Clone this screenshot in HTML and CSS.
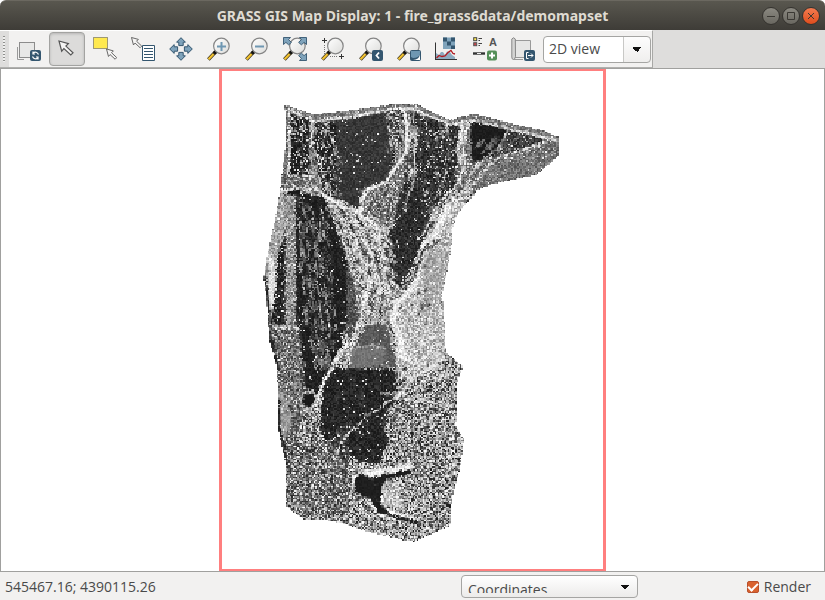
FILE: index.html
```html
<!DOCTYPE html>
<html lang="en">
<head>
<meta charset="utf-8">
<title>GRASS GIS Map Display</title>
<link rel="stylesheet" href="styles.css">
</head>
<body>
<svg class="defs" aria-hidden="true">
  <defs>
    <linearGradient id="glass" x1="0" y1="0" x2="1" y2="1"><stop offset="0" stop-color="#fff"/><stop offset="1" stop-color="#dcdcda"/></linearGradient>
    <g id="lens">
      <path d="M8.6 14.8 1.4 22.4" stroke="#3a3320" stroke-width="3.600"/>
      <path d="M6.6 17 1.6 22.2" stroke="#f2c230" stroke-width="2.2"/>
      <path d="M9.6 13.8 7.2 16.4" stroke="#111" stroke-width="3.4"/>
      <circle cx="14.4" cy="9" r="7.8" fill="url(#glass)" stroke="#858585" stroke-width="1.2"/>
    </g>
    <path id="pointer" d="M0 0 9.4 2.6 6.9 5.1 14 11.8 11.8 14 4.9 7.6 2.7 10.2Z" fill="#f6f5f4" stroke="#555" stroke-width="1.2"/>
    <path id="pan" d="M12 .7 16.4 5.2H14.2V8.6H9.8V5.2H7.6Z"/>
    <path id="corner" d="M.5.5H7.5L5.6 2.6 8.4 5.4 5.6 7.8 2.9 5.4.5 7.5Z"/>
    <rect id="badge" x="13" y="13" width="11" height="11" rx="2" fill="#34566f"/>
  </defs>
</svg>

<header class="titlebar">
  <h1>GRASS GIS Map Display: 1 - fire_grass6data/demomapset</h1>
  <div class="controls">
    <button class="control" aria-label="Minimize"><svg viewBox="0 0 18 18"><path d="M5 9.5H13"/></svg></button>
    <button class="control" aria-label="Maximize"><svg viewBox="0 0 18 18"><path d="M5.5 5.5H12.500V12.500H5.500Z"/></svg></button>
    <button class="control close" aria-label="Close"><svg viewBox="0 0 18 18"><path d="M6 6 12 12M12 6 6 12"/></svg></button>
  </div>
</header>

<div class="toolrow">
  <div class="toolbar" role="toolbar" aria-label="Map tools">
    <span class="grip"></span>
    <button class="tool" aria-label="Render map"><svg viewBox="0 0 24 24"><path d="M.5 10V22.500H7" stroke="#999"/><rect x="2.500" y="5.500" width="15" height="15" fill="#e8e8e7" stroke="#8c8c8c"/><use href="#badge"/><path d="M21.500 17.500C20.500 15 18 14.500 16 16M16 14.500V17H18M15.500 19.500C16.500 22 19 22.500 21 21M21 22.500V20H19" stroke="#fff" stroke-width="1.200"/></svg></button>
    <button class="tool active" aria-label="Pointer"><svg viewBox="0 0 24 24"><use href="#pointer" x="4" y="4"/></svg></button>
    <button class="tool" aria-label="Select features"><svg viewBox="0 0 24 24"><rect x=".5" y=".5" width="14" height="11" fill="#ffe94f" stroke="#444" stroke-dasharray="1 1"/><use href="#pointer" transform="translate(13.500 12) scale(.73)"/></svg></button>
    <button class="tool" aria-label="Query map"><svg viewBox="0 0 24 24"><use href="#pointer" transform="translate(.5 .5) scale(.73)"/><path d="M11.500 8.500H23.500V23.500H11.500Z" fill="#fff" stroke="#34566f"/><path d="M13 11.500H22M13 14.500H22M13 17.500H22M13 20.500H22" stroke="#34566f"/></svg></button>
    <button class="tool" aria-label="Pan"><svg viewBox="0 0 24 24"><g fill="#7fa3bb" stroke="#34566f"><use href="#pan"/><use href="#pan" transform="rotate(90 12 12)"/><use href="#pan" transform="rotate(180 12 12)"/><use href="#pan" transform="rotate(270 12 12)"/></g></svg></button>
    <button class="tool" aria-label="Zoom in"><svg viewBox="0 0 24 24"><use href="#lens"/><path d="M10 9.500H19M14.500 5V14" stroke="#6f97b2" stroke-width="2"/></svg></button>
    <button class="tool" aria-label="Zoom out"><svg viewBox="0 0 24 24"><use href="#lens"/><path d="M10 9.500H19" stroke="#6f97b2" stroke-width="2"/></svg></button>
    <button class="tool" aria-label="Zoom to extent"><svg viewBox="0 0 24 24"><use href="#lens"/><g fill="#7fa3bb" stroke="#34566f" stroke-width=".9"><use href="#corner"/><use href="#corner" transform="translate(24 0) scale(-1 1)"/><use href="#corner" transform="translate(24 24) scale(-1)"/></g></svg></button>
    <button class="tool" aria-label="Zoom to region"><svg viewBox="0 0 24 24"><use href="#lens"/><path d="M3.500 1V6M1 3.500H6M20.500 17V22M18 19.500H23" stroke="#333"/><path d="M3.500 8V17M9 19.500H17" stroke="#777" stroke-dasharray="1 1"/></svg></button>
    <button class="tool" aria-label="Zoom back"><svg viewBox="0 0 24 24"><use href="#lens"/><use href="#badge"/><path d="M20 15.500 17.500 18.500 20 21.500" stroke="#fff" stroke-width="1.800"/></svg></button>
    <button class="tool" aria-label="Zoom options"><svg viewBox="0 0 24 24"><use href="#lens"/><use href="#badge"/><path d="M14 14H23V17Q22 21 16 21L14 20Z" fill="#6f97b2"/><path d="M23 17.500V23H16Q22 22.500 23 17.500Z" fill="#fff"/></svg></button>
    <button class="tool" aria-label="Analyze map"><svg viewBox="0 0 24 24"><path d="M8 .5H20V12H8Z" fill="#7fa3bb"/><path d="M8 .5h4v4H8zM16 .5h4v4h-4zM12 4.500h4v4h-4zM16 8.500h4V12h-4z" fill="#34566f"/><path d="M1 22.500V16L4 18 6 15H8L10 18 12 14.500 15 15 17 18 20 20V22.500Z" fill="#8dabc0"/><path d="M.5 5.500V23M0 22.500H22" stroke="#333"/><path d="M1.500 21 4 18.500 7 19.500 10 19 13 15.500 16 13.500 18 16.500 20 17" stroke="#b01c22" stroke-width="1.300"/></svg></button>
    <button class="tool" aria-label="Add map elements"><svg viewBox="0 0 24 24"><rect x=".7" y=".7" width="3" height="3" fill="#ffe94f" stroke="#444"/><rect x=".7" y="5.700" width="3" height="3" fill="#c8464b" stroke="#555"/><path d="M5.500 1.500H9M5.500 3.500H7M5.500 6.500H9M5.500 8.500H7" stroke="#444"/><text x="16" y="9" class="glyph">A</text><path d="M0 16.500H12" stroke="#333" stroke-width="2.400"/><path d="M4 16.500H8" stroke="#fff" stroke-width=".9"/><rect x="14" y="13.500" width="10" height="10" rx="2" fill="#548f58"/><path d="M16 18.500H22M19 15.500V21.500" stroke="#fff" stroke-width="2"/></svg></button>
    <button class="tool" aria-label="Save display"><svg viewBox="0 0 24 24"><path d="M4 3.500H19.500V20.500H4Z" fill="#e6e6e5" stroke="#999"/><path d="M.8 2Q2.500-.5 4.300 2L4.500 19.500Q4 22.500 2.500 22.500.8 22.500.8 20Z" fill="#d4d4d3" stroke="#888"/><path d="M2.500 22.500H12" stroke="#999"/><use href="#badge"/><path d="M17.500 15.500H15.500V21.500H17.500M17 18.500H22M20 16.500 22 18.500 20 20.500" stroke="#fff"/></svg></button>
    <select class="view" aria-label="View mode"><option>2D view</option></select>
  </div>
</div>

<main class="display">
  <div class="region"><canvas id="map" width="258" height="335" role="img" aria-label="Greyscale raster map"></canvas></div>
</main>

<footer class="statusbar">
  <output class="position">545467.16; 4390115.26</output>
  <div class="mode"><div class="mode-clip"><select aria-label="Status bar mode"><option>Coordinates</option></select></div></div>
  <label class="render"><input type="checkbox" checked>Render</label>
</footer>
<script src="map.js"></script>
</body>
</html>
```
FILE: styles.css
```css
* { box-sizing: border-box; }
body {
  margin: 0;
  min-height: 100vh;
  display: flex;
  flex-direction: column;
  background: #fff;
  color: #4a4a4a;
  font: 14px/20px "Open Sans", "Noto Sans", sans-serif;
}
button, select, input { font: inherit; color: inherit; margin: 0; }
svg { display: block; fill: none; }
.defs { position: absolute; width: 0; height: 0; }

.titlebar {
  height: 30px;
  display: grid;
  grid-template-columns: 76px 1fr 76px;
  align-items: center;
  border-radius: 6px 6px 0 0;
  border-top: 1px solid #6b6860;
  background: linear-gradient(#59574f, #3e3c37);
}
.titlebar h1 {
  grid-column: 2;
  margin: 0;
  text-align: center;
  white-space: nowrap;
  font: bold 14px/20px "Noto Sans", "Open Sans", sans-serif;
  color: #dfdbd2;
}
.controls { display: flex; gap: 2px; justify-content: flex-end; padding-right: 5px; }
.control {
  width: 18px;
  height: 18px;
  padding: 0;
  border: 1px solid #35332f;
  border-radius: 50%;
  background: linear-gradient(#8b8981, #696760);
}
.control svg { width: 18px; height: 18px; margin: -1px; stroke: #3a3833; }
.control.close { background: linear-gradient(#f47b50, #df4d1d); }

.toolrow { display: flex; background: #dedddc; border-bottom: 1px solid #a0a09e; }
.toolbar {
  height: 38px;
  display: flex;
  align-items: center;
  gap: 2px;
  padding-right: 1px;
  border-top: 1px solid #fff;
  border-right: 1px solid #a8a8a6;
  border-bottom: 1px solid #b0b0ae;
  background: #f2f1f0;
}
.grip {
  width: 9px;
  align-self: stretch;
  border: solid #dedddc;
  border-width: 5px 4px 5px 3px;
  background: repeating-linear-gradient(#8f8f8d 0 1px, #f0f0ef 1px 3px);
}
.tool {
  width: 36px;
  height: 34px;
  padding: 0;
  display: grid;
  place-items: center;
  border: 1px solid transparent;
  border-radius: 4px;
  background: none;
}
.tool svg { width: 24px; height: 24px; }
.tool.active { border-color: #a3a3a1; background: #dcdbda; box-shadow: inset 0 1px 3px #b5b4b3; }
.glyph { font: bold 11px "Liberation Sans", sans-serif; fill: #555; }
select { appearance: none; outline: none; }
.view {
  width: 108px;
  height: 27px;
  padding: 0 5px;
  border: 1px solid #a5a5a3;
  border-radius: 4px;
  background:
    conic-gradient(from 315deg at 50% 5px, #111 90deg, transparent 0) right 8px top 10px / 10px 5px no-repeat,
    linear-gradient(#c8c8c6, #c8c8c6) right 26px top / 1px 100% no-repeat,
    linear-gradient(#fdfdfd, #efeeed) right top / 26px 100% no-repeat,
    #fff;
}

.display {
  flex: 1;
  display: flex;
  justify-content: center;
  overflow: hidden;
  border: solid #a0a09e;
  border-width: 0 1px 1px;
}
.region {
  height: calc(100vh - 98px);
  aspect-ratio: 387 / 502;
  border: solid #ff7f7f;
  border-width: 2px 3px;
}
.region canvas { display: block; width: 100%; height: 100%; image-rendering: pixelated; }

.statusbar {
  height: 28px;
  display: grid;
  grid-template-columns: 456px 177px 1fr;
  align-items: start;
  padding: 3px 14px 0 5px;
  background: #f2f1f0;
}
.position, .render { padding-top: 2px; }
.mode {
  height: 23px;
  border: 1px solid #a5a5a3;
  border-radius: 4px;
  background:
    conic-gradient(from 315deg at 50% 5px, #111 90deg, transparent 0) right 7px top 9px / 10px 5px no-repeat,
    linear-gradient(#fff, #ecebea);
}
.mode-clip { height: 17px; overflow: hidden; }
.mode select {
  width: 100%;
  height: 28px;
  padding: 0 6px;
  border: 0;
  background: none;
}
.render { display: flex; align-items: center; gap: 5px; justify-self: end; }
.render input {
  appearance: none;
  width: 12px;
  height: 12px;
  display: grid;
  place-items: center;
  border: 1px solid #b8502c;
  border-radius: 2px;
  background: #d9622f;
}
.render input:checked::after {
  content: "";
  width: 8px;
  height: 4px;
  border: solid #fff;
  border-width: 0 0 2px 2px;
  transform: translateY(-1px) rotate(-45deg);
}
```
FILE: map.js
```js
// Terrain classes are painted as rgb(brightness, noise range, share of bright cells),
// then each raster cell is sampled from its class.
const canvas = document.getElementById("map");
const ctx = canvas.getContext("2d", { willReadFrequently: true });
ctx.scale(258 / 381, 335 / 499);
ctx.translate(-222, -71);

let seed = 7;
const rnd = () => {
  seed = (seed * 1664525 + 1013904223) >>> 0;
  return seed / 4294967296;
};
const trace = (p) => {
  ctx.beginPath();
  for (let i = 0; i < p.length; i += 2) ctx.lineTo(p[i], p[i + 1]);
};
const area = (color, p) => { ctx.fillStyle = `rgb(${color})`; trace(p); ctx.closePath(); ctx.fill(); };
const line = (color, width, p) => { ctx.strokeStyle = `rgb(${color})`; ctx.lineWidth = width; trace(p); ctx.stroke(); };
// Scatters short strokes of one direction over a box.
const hatch = (color, count, x, y, w, h, dx, dy) => {
  for (let i = 0; i < count; i++) {
    const px = x + rnd() * w, py = y + rnd() * h, k = 0.4 + rnd();
    line(color, 0.8 + rnd() * 0.8, [px, py, px + dx * k, py + dy * k]);
  }
};

const WHITE = "238,50,0", SPECK = "112,175,95", INK = "38,30,0";

const outline = [285,105, 313,115, 350,111, 390,105, 418,105, 433,113, 450,120, 473,114, 487,117, 523,127, 543,131, 559,138, 559,155, 550,163, 537,174, 510,180, 490,185, 478,190, 472,198, 459,212, 453,225, 451,250, 447,273, 442,293, 444,320, 446,353, 463,367, 457,383, 456,427, 464,440, 460,470, 452,500, 450,527, 435,533, 415,543, 402,541, 365,532, 345,525, 322,520, 303,520, 285,506, 286,467, 278,427, 278,390, 277,367, 270,343, 267,300, 264,277, 270,243, 275,222, 280,192, 286,142];

ctx.save();
trace(outline);
ctx.closePath();
ctx.clip();
area(SPECK, [250,90, 570,90, 570,550, 250,550]);

// North
area("110,90,45", [280,100, 570,100, 570,190, 280,190]);
area("32,40,42", [291,112, 311,118, 309,175, 289,177]);
area("36,40,30", [314,124, 338,121, 340,200, 326,196, 314,160]);
area("56,34,5", [336,121, 388,112, 396,140, 392,168, 381,186, 360,210, 335,196]);
area("80,110,45", [384,112, 405,108, 405,150, 393,165]);
area("52,65,20", [410,112, 462,128, 460,162, 455,185, 444,202, 424,225, 400,255, 388,215, 404,185, 408,150]);
area("46,45,10", [402,190, 440,200, 428,232, 414,262, 400,288, 386,270, 382,240]);
area("28,14,0", [470,120, 508,130, 496,156, 472,163]);
area("58,60,18", [508,130, 548,140, 528,147, 497,158]);
area("115,75,12", [559,141, 559,155, 537,174, 510,180, 490,185, 476,190, 490,166, 520,155]);
area("110,90,20", [286,176, 315,177, 325,196, 288,190]);
area("115,120,40", [360,190, 385,182, 402,180, 396,215, 385,240, 362,215]);
hatch("215,80,0", 26, 408, 115, 10, 55, 0, 10);
hatch("190,100,0", 22, 425, 120, 36, 60, 2, 8);
hatch("195,90,0", 22, 386, 112, 18, 40, 2, 9);
hatch("120,90,0", 30, 482, 132, 40, 30, -8, 7);
hatch("205,80,0", 30, 425, 185, 40, 45, -6, 9);

// West
area("160,90,25", [279,195, 290,195, 292,330, 266,340, 262,270]);
area("36,60,22", [284,235, 290,200, 290,325, 271,325, 274,275]);
area("140,110,45", [285,195, 297,195, 297,328, 285,328]);
area("34,30,8", [296,193, 322,196, 342,225, 349,270, 347,320, 336,355, 318,395, 303,385, 298,330]);
area("85,70,12", [346,260, 358,268, 360,330, 347,335]);
area("105,115,40", [270,328, 300,328, 304,385, 309,400, 295,445, 283,445, 276,380]);
area("155,60,20", [278,390, 291,398, 292,425, 284,440, 278,427]);

// Centre
area("155,170,55", [326,200, 362,215, 385,245, 396,285, 410,295, 395,320, 360,320, 352,275]);
area("185,120,75", [471,190, 459,212, 451,250, 442,293, 446,360, 410,385, 395,370, 395,325, 410,290, 422,250, 445,205]);
area("165,70,45", [425,255, 449,250, 443,300, 424,315]);
area("90,36,4", [356,347, 366,326, 390,322, 393,350, 397,368, 350,368]);
area("115,30,3", [352,350, 386,347, 384,367, 350,368]);

// South
area("38,42,8", [330,369, 394,370, 398,398, 388,410, 384,430, 390,440, 384,450, 380,465, 360,462, 338,450, 326,468, 320,415, 324,385]);
area("60,80,22", [332,435, 350,422, 348,470, 330,465]);
area("100,130,60", [285,445, 330,440, 352,480, 350,515, 300,518, 285,505]);
area(WHITE, [353,477, 362,472, 412,464, 414,471, 389,480, 384,490, 386,509, 420,520, 418,526, 378,517, 366,499, 350,490]);
area("30,10,0", [355,480, 361,475, 371,479, 414,469, 409,475, 387,480, 382,488, 381,505, 390,514, 420,523, 418,526, 390,518, 378,513, 370,500, 354,492]);
area("190,130,40", [386,482, 397,482, 398,492, 404,508, 388,507, 383,498]);

// Parallel field and gully streaks
for (let i = 0; i < 9; i++) {
  const x = 300 + i * 3.5;
  ctx.setLineDash([8 + rnd() * 16, 3 + rnd() * 10]);
  ctx.lineDashOffset = rnd() * 30;
  line(i % 2 ? "150,90,0" : "225,60,0", 1.1, [x - 1, 197 + i * 3, x, 240, x + 4, 290, x + 9, 330, x + 16 - i * 2, 370]);
}
for (let i = 0; i < 12; i++) {
  ctx.setLineDash([4 + rnd() * 10, 3 + rnd() * 4]);
  line(i % 3 ? "230,60,0" : INK, 1.5, [322 + i * 3.6, 196 + i, 340 + i * 3.8, 225, 354 + i * 3.6, 255, 366 + i * 3, 290, 362 + i * 3, 318]);
}
for (let i = 0; i < 8; i++) {
  ctx.setLineDash([4 + rnd() * 7, 3 + rnd() * 4]);
  line("215,80,0", 1.2, [294 + i * 4.5, 115, 298 + i * 5, 145, 304 + i * 5, 175, 312 + i * 4, 198]);
}
ctx.setLineDash([]);
hatch("210,80,0", 34, 298, 200, 40, 165, 2, 9);
hatch("26,10,0", 50, 300, 200, 42, 165, 1, 14);
hatch(INK, 44, 392, 368, 54, 62, 9, -7);
hatch(WHITE, 40, 392, 368, 54, 62, 9, -6);
hatch("60,50,0", 40, 400, 430, 55, 60, 6, -2);
hatch("60,50,0", 50, 282, 395, 45, 110, 4, 5);
hatch("215,80,0", 40, 352, 225, 40, 80, 4, 9);
hatch("70,60,0", 30, 352, 240, 44, 70, 3, 8);
hatch("70,60,0", 26, 408, 220, 26, 100, -2, 6);
hatch("70,60,0", 36, 300, 470, 90, 55, 7, 3);
hatch("75,40,0", 24, 332, 372, 55, 80, 1, 10);

// Roads and channels
line("120,70,20", 8, [283,106, 313,118, 350,114, 390,107, 418,107, 450,122, 473,116, 523,129, 560,140]);
line(WHITE, 2, [288,109, 313,121, 350,117, 390,109, 412,108, 432,117, 452,125, 470,120, 520,132, 558,141]);
line(WHITE, 2.2, [289,110, 290,150, 288,176]);
line(WHITE, 1.8, [287,176, 300,175, 315,177]);
line(WHITE, 1.8, [281,192, 300,188, 317,190, 330,200]);
line("25,10,0", 3.4, [287,194, 302,191]);
line("225,80,0", 2, [312,120, 311,145, 320,160, 324,178, 332,198]);
line(WHITE, 1.1, [325,120, 331,138, 342,165]);
line(WHITE, 3, [402,108, 407,125, 406,152, 396,167, 386,182, 378,187, 368,189, 362,200, 361,213]);
line(WHITE, 3, [328,198, 342,207, 356,212, 368,220, 379,230, 380,250]);
line(WHITE, 1.3, [412,108, 415,145, 414,180, 407,198, 404,212, 396,220, 389,230, 384,247]);
line("220,90,0", 4, [463,123, 458,150, 461,165]);
line(WHITE, 2, [468,120, 463,150, 465,165, 455,187, 442,200, 434,212, 427,228, 418,240]);
line(WHITE, 1.6, [546,142, 520,151, 500,157, 488,166, 475,183, 455,197, 446,210, 438,218, 437,240]);
line("210,90,0", 1.6, [508,130, 500,146, 480,163, 468,178, 466,196]);
line("232,70,0", 6, [448,205, 442,222, 436,232, 424,246, 419,262, 417,280, 408,294, 397,303, 393,322, 400,338, 404,362]);
line("55,50,0", 2, [441,240, 434,245, 424,248, 419,262, 415,278]);
line("225,60,0", 7, [266,252, 273,268, 270,310]);
line(WHITE, 1.4, [270,328, 300,328]);
line(INK, 2, [297,196, 297,325]);
line(INK, 3, [264,275, 268,302, 269,334, 278,370]);
line(INK, 3, [278,400, 279,428, 287,466]);
line("225,100,0", 3.5, [371,280, 364,302, 360,322, 353,342, 342,350, 334,365, 325,380, 314,408]);
line("190,50,0", 1.5, [350,349, 370,346, 387,349]);
line("225,60,0", 1.4, [363,326, 377,321, 388,326, 394,350]);
line(WHITE, 1.6, [442,360, 436,366, 427,371, 415,378, 406,388, 397,398, 388,402, 382,408, 372,414, 366,417, 357,428, 348,434, 341,444, 335,460]);
line(WHITE, 1.4, [380,394, 405,394]);
ctx.fillStyle = "rgb(195,90,0)";
ctx.beginPath(); ctx.ellipse(308, 402, 8, 11, 0.3, 0, 7); ctx.fill();
ctx.fillStyle = "rgb(26,8,0)";
ctx.beginPath(); ctx.ellipse(308, 401, 6, 8, 0.3, 0, 7); ctx.fill();
ctx.restore();

const W = canvas.width, H = canvas.height;
const img = ctx.getImageData(0, 0, W, H);
const src = new Uint8ClampedArray(img.data);
const d = img.data;
for (let y = 0; y < H; y++) {
  for (let x = 0; x < W; x++) {
    const i = (y * W + x) * 4;
    if (src[i + 3] < 128) { d[i + 3] = 0; continue; }
    // Neighbouring classes interleave along their shared edge.
    const jx = rnd() < 0.3 ? (rnd() < 0.5 ? -1 : 1) : 0;
    const jy = rnd() < 0.3 ? (rnd() < 0.5 ? -1 : 1) : 0;
    let s = ((y + jy) * W + x + jx) * 4;
    if (src[s + 3] < 128) s = i;
    const bright = rnd() * 255 < src[s + 2];
    const v = bright ? 165 + rnd() * 90 : src[s] + (rnd() - 0.5) * src[s + 1];
    d[i] = d[i + 1] = d[i + 2] = Math.max(24, Math.min(255, v));
    d[i + 3] = 255;
  }
}
ctx.putImageData(img, 0, 0);
```
